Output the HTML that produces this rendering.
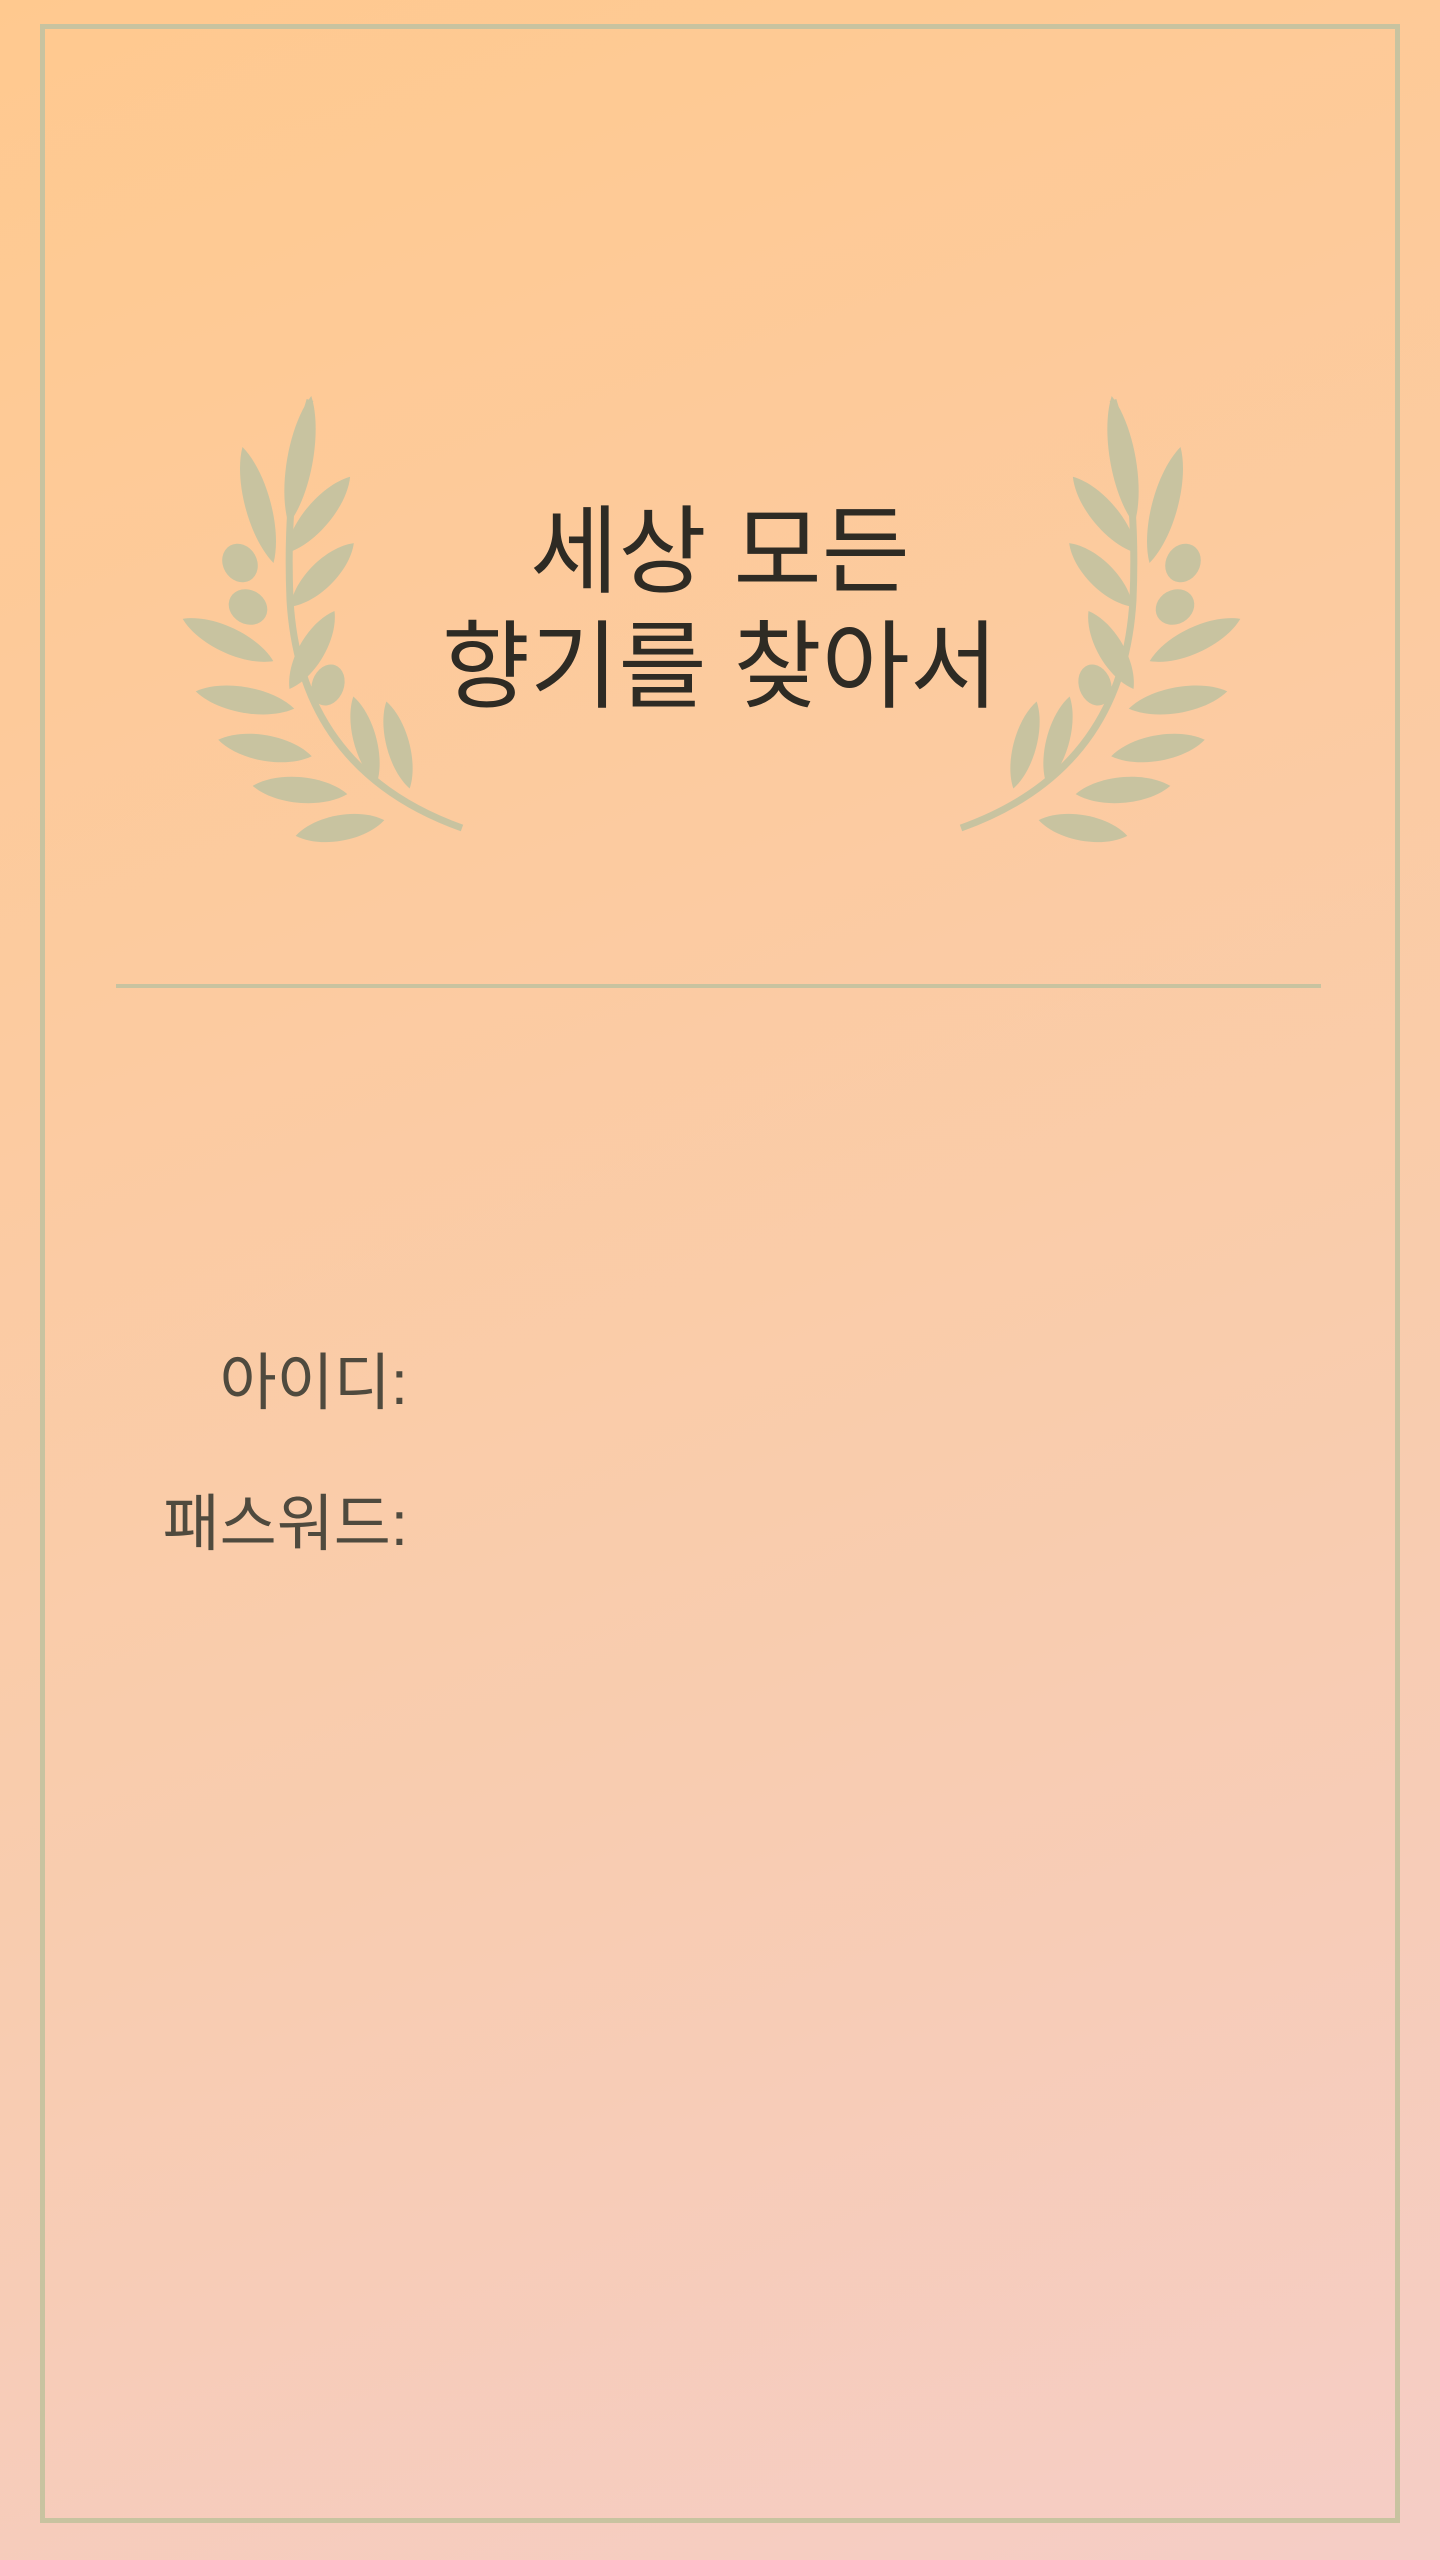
<!DOCTYPE html>
<html><head><meta charset="utf-8">
<style>
html,body{margin:0;padding:0}
body{width:1440px;height:2560px;position:relative;overflow:hidden;
background:linear-gradient(160deg,#ffc98f 0%,#fccba0 35%,#f8ccb0 65%,#f5cdc6 100%);
font-family:"Liberation Sans","Noto Sans CJK KR",sans-serif}
.frame{position:absolute;left:40px;top:24px;width:1350px;height:2489px;border:5px solid #c8c3a0}
.hr{position:absolute;left:116px;top:984px;width:1205px;height:4px;background:#c8c3a0}
.title{position:absolute;left:0;width:1440px;top:495px;text-align:center;font-size:96px;line-height:115px;color:#2e2b24}
.lbl{position:absolute;right:1032px;font-size:62px;color:#4f4a3e;line-height:1}
svg{position:absolute;left:0;top:0}
</style></head><body>
<div class="frame"></div>
<svg width="1440" height="1000" viewBox="0 0 1440 1000">
<defs>
<path id="lf" d="M0,-50 C19,-25 19,25 0,50 C-19,25 -19,-25 0,-50Z"/>
<g id="laurel" fill="#c8c3a0">
<path d="M462,828 Q300,770 290,600 Q285,480 310,400" fill="none" stroke="#c8c3a0" stroke-width="7"/>
<use href="#lf" transform="translate(300,460) rotate(10) scale(0.9,1.3)"/>
<use href="#lf" transform="translate(258,505) rotate(-15) scale(0.9,1.2)"/>
<use href="#lf" transform="translate(318,515) rotate(40) scale(0.9,1.0)"/>
<use href="#lf" transform="translate(322,575) rotate(45) scale(0.9,0.9)"/>
<use href="#lf" transform="translate(228,640) rotate(-65) scale(0.9,1.0)"/>
<use href="#lf" transform="translate(245,700) rotate(-80) scale(0.9,1.0)"/>
<use href="#lf" transform="translate(312,650) rotate(30) scale(0.9,0.9)"/>
<use href="#lf" transform="translate(265,748) rotate(-80) scale(0.9,0.95)"/>
<use href="#lf" transform="translate(300,790) rotate(-85) scale(0.9,0.95)"/>
<use href="#lf" transform="translate(365,740) rotate(-15) scale(0.8,0.9)"/>
<use href="#lf" transform="translate(398,745) rotate(-15) scale(0.8,0.9)"/>
<use href="#lf" transform="translate(340,828) rotate(-100) scale(0.9,0.9)"/>
<ellipse cx="240" cy="563" rx="17" ry="20" transform="rotate(-30 240 563)"/>
<ellipse cx="248" cy="607" rx="17" ry="20" transform="rotate(-60 248 607)"/>
<ellipse cx="328" cy="685" rx="16" ry="21" transform="rotate(20 328 685)"/>
</g>
</defs>
<use href="#laurel"/>
<use href="#laurel" transform="translate(1423,0) scale(-1,1)"/>
</svg>
<div class="title">세상 모든<br>향기를 찾아서</div>
<div class="hr"></div>
<div class="lbl" style="top:1353px">아이디:</div>
<div class="lbl" style="top:1494px">패스워드:</div>
</body></html>
